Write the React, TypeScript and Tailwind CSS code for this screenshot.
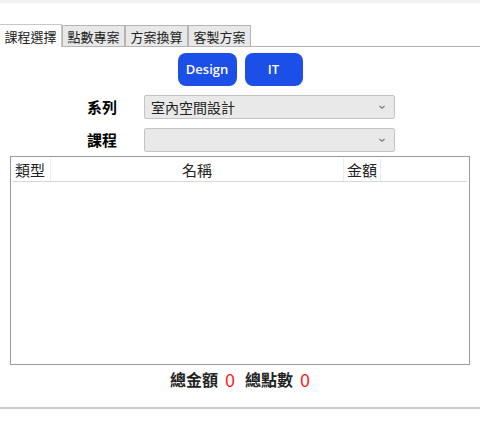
import { useState } from "react";

const tabs = ["課程選擇", "點數專案", "方案換算", "客製方案"];

function Chevron() {
  return (
    <svg width="8" height="6" viewBox="0 0 8 6" className="text-gray-500">
      <path d="M1.5 2 L4 4.3 L6.5 2" fill="none" stroke="currentColor" strokeWidth="1.1" />
    </svg>
  );
}

function SelectRow({ label, value }: { label: string; value: string }) {
  return (
    <div className="flex items-center">
      <div className="w-[144px] pl-[87px] text-[15px] font-bold text-black">{label}</div>
      <div className="flex h-[24px] w-[251px] items-center justify-between rounded-[2px] border border-[#c4c4c4] bg-[#e9e9e9] pl-[6px] pr-[8px] text-[14px] text-[#222]">
        <span>{value}</span>
        <Chevron />
      </div>
    </div>
  );
}

export default function App() {
  const [active, setActive] = useState(0);

  return (
    <div
      className="h-[421px] w-[480px] overflow-hidden bg-white"
      style={{ fontFamily: '"Noto Sans CJK TC", "Noto Sans", sans-serif' }}
    >
      <div className="h-[3px] bg-[#f1f1f4]" />

      {/* Tabs */}
      <div className="mt-[21px] flex h-[23px] items-end border-b border-[#b4b4b4]">
        {tabs.map((t, i) => (
          <button
            key={t}
            onClick={() => setActive(i)}
            className={
              i === active
                ? "-mb-px h-[23px] w-[62px] border-r border-t border-[#c8c8c8] bg-white text-[13px] leading-[21px] text-[#222]"
                : "h-[21px] w-[63px] border border-b-0 border-[#b4b4b4] bg-[#e8e8e8] text-[13px] leading-[19px] text-[#222]"
            }
          >
            {t}
          </button>
        ))}
      </div>

      {/* Category buttons */}
      <div className="mt-[6px] flex justify-center gap-[8px]">
        <button
          className="h-[33px] w-[59px] rounded-[8px] bg-[#1c4fe8] text-[13px] font-semibold text-white"
          style={{ fontFamily: '"Open Sans", sans-serif' }}
        >
          Design
        </button>
        <button
          className="h-[33px] w-[58px] rounded-[8px] bg-[#1c4fe8] text-[13px] font-semibold text-white"
          style={{ fontFamily: '"Open Sans", sans-serif' }}
        >
          IT
        </button>
      </div>

      <div className="mt-[9px] flex flex-col gap-[9px]">
        <SelectRow label="系列" value="室內空間設計" />
        <SelectRow label="課程" value="" />
      </div>

      {/* Table */}
      <div className="mx-[10px] mt-[4px] h-[209px] border border-[#9a9aa6] px-[2px] pt-[1px]">
        <div className="flex h-[24px] border-b border-[#d8d8dc] text-[15px] leading-[23px] text-[#222]">
          <div className="w-[38px] border-r border-[#ececee] pl-[2px]">類型</div>
          <div className="w-[293px] border-r border-[#ececee] text-center">名稱</div>
          <div className="w-[37px] border-r border-[#ececee] text-center">金額</div>
          <div className="flex-1" />
        </div>
      </div>

      {/* Totals */}
      <div className="mt-[3px] flex items-center justify-center gap-[7px] text-[16px] font-bold leading-[22px]">
        <span className="text-[#222]">總金額</span>
        <span className="text-[18px] font-normal text-[#ff1a1a]">0</span>
        <span className="ml-[3px] text-[#222]">總點數</span>
        <span className="text-[18px] font-normal text-[#ff1a1a]">0</span>
      </div>

      <div className="mt-[17px] border-t-2 border-[#cacaca]" />
    </div>
  );
}
